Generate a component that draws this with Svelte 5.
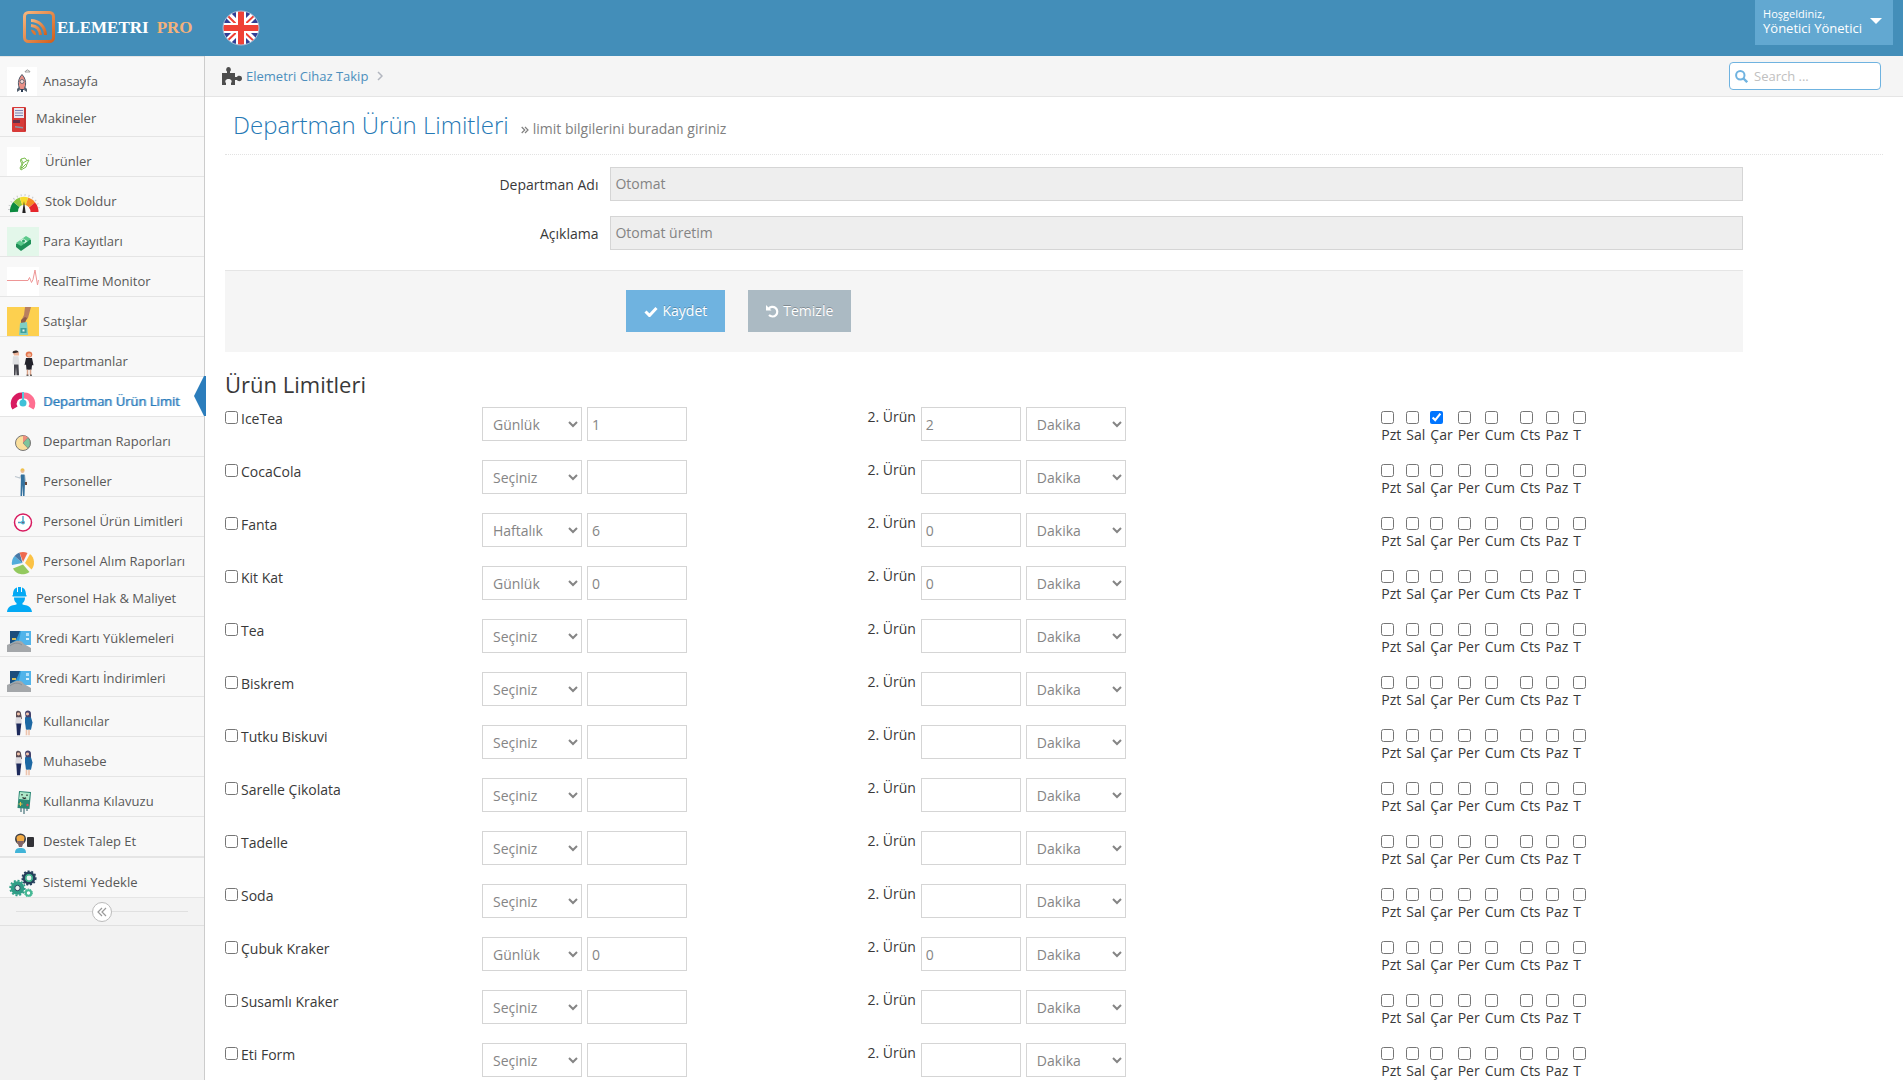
<script>
	const menu = [
		{ icon: "rocket", text: "Anasayfa" },
		{ icon: "machine", text: "Makineler", size: "small" },
		{ icon: "leaf", text: "Ürünler", size: "wide" },
		{ icon: "gauge", text: "Stok Doldur", size: "wide" },
		{ icon: "money", text: "Para Kayıtları" },
		{ icon: "pulse", text: "RealTime Monitor" },
		{ icon: "sale", text: "Satışlar" },
		{ icon: "couple", text: "Departmanlar" },
		{ icon: "meter", text: "Departman Ürün Limit", active: true },
		{ icon: "pie", text: "Departman Raporları" },
		{ icon: "worker", text: "Personeller" },
		{ icon: "clock", text: "Personel Ürün Limitleri" },
		{ icon: "chart", text: "Personel Alım Raporları" },
		{ icon: "helmet", text: "Personel Hak & Maliyet", size: "small" },
		{ icon: "card", text: "Kredi Kartı Yüklemeleri", size: "small" },
		{ icon: "card", text: "Kredi Kartı İndirimleri", size: "small" },
		{ icon: "women", text: "Kullanıcılar" },
		{ icon: "women", text: "Muhasebe" },
		{ icon: "robot", text: "Kullanma Kılavuzu" },
		{ icon: "support", text: "Destek Talep Et" },
		{ icon: "gears", text: "Sistemi Yedekle", last: true }
	];

	const boxes = { small: [25, 25], wide: [34, 29], normal: [32, 29] };

	const days = ["Pzt", "Sal", "Çar", "Per", "Cum", "Cts", "Paz", "T"];
	const periods = ["Seçiniz", "Günlük", "Haftalık", "Aylık"];
	const units = ["Dakika", "Saat"];

	let products = [
		{ name: "IceTea", period: "Günlük", limit: "1", second: "2", unit: "Dakika", days: ["Çar"] },
		{ name: "CocaCola" },
		{ name: "Fanta", period: "Haftalık", limit: "6", second: "0" },
		{ name: "Kit Kat", period: "Günlük", limit: "0", second: "0" },
		{ name: "Tea" },
		{ name: "Biskrem" },
		{ name: "Tutku Biskuvi" },
		{ name: "Sarelle Çikolata" },
		{ name: "Tadelle" },
		{ name: "Soda" },
		{ name: "Çubuk Kraker", period: "Günlük", limit: "0", second: "0" },
		{ name: "Susamlı Kraker" },
		{ name: "Eti Form" }
	].map((p) => ({ period: "Seçiniz", limit: "", second: "", unit: "Dakika", days: [], ...p }));
</script>

{#snippet menuIcon(name, w, h)}
	<svg class="menu_icon" width={w} height={h} viewBox="0 0 {w} {h}" aria-hidden="true">
		{#if name === "rocket"}
			<rect width="30" height="29" fill="#fff" />
			<path d="M18 5h5c0-1-1-1-1.500-1 0-1.500-2-1.500-2.300 0-.7 0-1.200.3-1.200 1z" fill="#fff" stroke="#777" stroke-width=".7" />
			<path d="M12 20l-2 2v3l3-2zM18 20l2 2v3l-3-2z" fill="#53606f" />
			<path d="M15 7.500c3 3 4 7 3.500 11l-1.500 4h-4l-1.500-4c-.5-4 .5-8 3.500-11z" fill="#e98f86" stroke="#515b6b" />
			<circle cx="15" cy="14.500" r="2" fill="#f6dcd8" stroke="#515b6b" stroke-width=".8" />
			<path d="M15 22v3" stroke="#2d3e55" stroke-width="2" />
		{:else if name === "machine"}
			<rect x="5" y="0" width="14" height="25" rx="1" fill="#d83a38" />
			<rect x="7" y="1" width="10" height="10" fill="#e8e6ee" />
			<path d="M8 3.500h8M8 6h8M8 8.500h8" stroke="#7f86b4" stroke-width="1.200" />
			<path d="M6 13h7v3H6z" fill="#64304b" />
			<path d="M8 19l8 1v1.500l-8-1z" fill="#8b97a9" />
			<path d="M18 1v23" stroke="#b22a2b" />
		{:else if name === "leaf"}
			<rect width="33" height="29" fill="#fff" />
			<path d="M14 12l4-1 2 2.500 2-.5-2 4-1 3-5 3-1-2 2-4-1.500-3zM14 12l2 4 4-2.500M15 21l4-4M16 16l-2 6" fill="none" stroke="#7bbd4f" />
		{:else if name === "gauge"}
			<g transform="translate(0 -2)">
				<path d="M2 25A15 15 0 0 1 32 25" fill="none" stroke="#c8cacc" stroke-width="2" stroke-dasharray="1 3" />
				<path d="M7 27A10.500 10.500 0 0 1 9.400 19.500" fill="none" stroke="#0c8a3f" stroke-width="8" />
				<path d="M9.400 19.500A10.500 10.500 0 0 1 14 16.300" fill="none" stroke="#8cc63e" stroke-width="8" />
				<path d="M14 16.300A10.500 10.500 0 0 1 20 16.300" fill="none" stroke="#f6dc2c" stroke-width="8" />
				<path d="M20 16.300A10.500 10.500 0 0 1 25 20" fill="none" stroke="#f58a26" stroke-width="8" />
				<path d="M25 20A10.500 10.500 0 0 1 27.500 27" fill="none" stroke="#e5262c" stroke-width="8" />
				<path d="M17 16l1.700 12h-3.400z" fill="#222" />
			</g>
		{:else if name === "money"}
			<rect width="33" height="29" fill="#e3f7ea" />
			<path d="M9 17l10-7 5 3v4l-10 7-5-4z" fill="#1f8f57" />
			<path d="M9 16l10-7 5 3-10 7z" fill="#5cc98b" />
			<path d="M13 13.500l3-2.200 4.500 3-3 2.200z" fill="#d6f3e0" />
			<circle cx="16.500" cy="14" r="1.500" fill="#2aa467" />
		{:else if name === "pulse"}
			<rect width="32" height="29" fill="#fff" />
			<path d="M0 13.500h21l1.500-3 2 5 1.500-3 2-9.500 2.500 15 1-5" fill="none" stroke="#ee9696" />
		{:else if name === "sale"}
			<rect width="32" height="29" fill="#fdd04f" />
			<path d="M18 0h6l-3 11-4 4-3-1 3-6z" fill="#b9805f" />
			<path d="M14 13l4-3 2 1-2 5-4 1z" fill="#8b5a4a" />
			<path d="M13 16l7-1 1 13h-9z" fill="#7fcfc4" />
			<path d="M13.500 21h6v5h-6z" fill="#3f9f9a" />
			<path d="M15.500 22.500h2v2h-2z" fill="#e9f5ee" />
		{:else if name === "couple"}
			<g transform="translate(0 3) scale(1 .9)">
				<path d="M6 3c0-3 5-3 6 0v3H7z" fill="#efb59a" />
				<path d="M5.500 3c0-3 6-3 6-.5L7 3.500z" fill="#332b2b" />
				<path d="M6 7h5.500l1 9h-7z" fill="#dfe0e2" />
				<path d="M7 16h4.500l.5 12H9.500L9 19l-.5 9H7z" fill="#45454d" />
				<circle cx="22" cy="5" r="3.300" fill="#e3754c" />
				<circle cx="22.200" cy="5.500" r="2" fill="#f1b69a" />
				<path d="M19 9h6l1.500 8H25l-.5 5h-5L19 16l-1.500 1z" fill="#23232b" />
				<path d="M20.500 22v6M23.500 22v6" stroke="#d9a289" stroke-width="1.500" />
				<path d="M19.500 28h2M23 28h2" stroke="#222" />
			</g>
		{:else if name === "meter"}
			<path d="M8 21a8.200 8.200 0 0 1 8-12.500" fill="none" stroke="#d81b60" stroke-width="6" />
			<path d="M16 8.500a8.200 8.200 0 0 1 8 12.500" fill="none" stroke="#ff6f91" stroke-width="6" />
			<path d="M16 5v10" stroke="#59c6da" stroke-width="2" />
			<circle cx="16" cy="16" r="3.500" fill="#3fc1d8" />
		{:else if name === "pie"}
			<g transform="translate(0 -3)">
				<circle cx="16" cy="19" r="7.500" fill="#fadf9c" stroke="#777" />
				<path d="M16 19v-7.500a7.500 7.500 0 0 1 5 2.200z" fill="#ef8e7d" />
				<path d="M16 19l5-5.300a7.500 7.500 0 0 1 0 10.600z" fill="#7dc49c" stroke="#777" stroke-width=".6" />
			</g>
		{:else if name === "worker"}
			<circle cx="15.500" cy="4" r="2" fill="#e9bc95" />
			<path d="M13.500 3.500c0-3 4-3 4 0z" fill="#efc14c" />
			<path d="M14 8l-1 3-5-1.500M17.500 8l1.500 8" fill="none" stroke="#bdc7cf" stroke-width="1.200" />
			<path d="M14 7.500h3.500l.5 8.500-.5 13h-1.500l-.4-11-.6 11h-1.500z" fill="#34719e" />
			<path d="M18 15h2v3h-2z" fill="#6c4a3b" />
		{:else if name === "clock"}
			<g transform="translate(0 -4)">
				<circle cx="16" cy="19.500" r="8.500" fill="#fff" stroke="#d81b60" stroke-width="1.500" />
				<path d="M16 13v6.500h-5" fill="none" stroke="#4f9fc4" stroke-width="1.400" />
				<circle cx="16" cy="19.500" r="2" fill="#4cb3d4" />
				<circle cx="16" cy="19.500" r=".8" fill="#8d3f5c" />
			</g>
		{:else if name === "chart"}
			<path d="M15.500 16L5 18A11 11 0 0 1 7.500 9z" fill="#52addc" />
			<path d="M15.500 16L7.500 9A11 11 0 0 1 12.500 5.500z" fill="#4878a6" />
			<path d="M16 15L12.500 5.500a11 11 0 0 1 8 .5z" fill="#ee6a4e" />
			<path d="M18 16L23 7a11 11 0 0 1 1.500 15.500z" fill="#fbc245" />
			<path d="M16 17.500L22.500 25A11 11 0 0 1 6 21.500z" fill="#93c95e" />
		{:else if name === "helmet"}
			<path d="M6 8c0-5 2-7 4-7.500V5h1V0h3v5h1V.5c2 .5 4 2.500 4 7.500h.5v1.500h-14V8z" fill="#03a9f4" />
			<path d="M7 10.500h11c0 3-1 4.500-2.500 5.500v1.500c5 1 9 2 9.500 7.500H0c.5-5.500 4-6.500 9.500-7.500V16C8 15 7 13.500 7 10.500z" fill="#03a9f4" />
		{:else if name === "card"}
			<path d="M3 4h21v14H3z" fill="#2c97d3" />
			<path d="M3 4h10L9 13l-6 4z" fill="#1c4e7c" />
			<path d="M14 4h10v14h-6l-6-4z" fill="#52b4ea" />
			<rect x="5" y="11" width="4" height="2" fill="#d5bd59" />
			<rect x="19" y="6" width="3" height="3" fill="#b5e2fb" />
			<path d="M19 11h3v2h-3z" fill="#d8f0fc" />
			<path d="M0 18l9-4c4-.5 6 0 8 3l7 4v4H0z" fill="#a4a7aa" />
			<path d="M3 19c3-3 8-4 12-1" fill="none" stroke="#8a8e92" />
		{:else if name === "women"}
			<g transform="translate(0 3) scale(1 .9)">
				<path d="M9 3c0-3 5-3 5 1l1 6-6 1z" fill="#5a4b53" />
				<circle cx="11.500" cy="4.500" r="1.600" fill="#efc2aa" />
				<path d="M9 8h5l1 8H8z" fill="#dcdadf" />
				<path d="M9.300 15h5L13 28h-3z" fill="#1e2b5c" />
				<path d="M18 3c1-4 6-3 6 1v6h-5z" fill="#44426c" />
				<circle cx="20.500" cy="4.500" r="1.600" fill="#efc2aa" />
				<path d="M18 8h6l1.500 6-1.500 8h-5l-1-8z" fill="#1d68a3" />
				<path d="M19.500 22v6M22 22v6" stroke="#edc4ad" stroke-width="1.600" />
			</g>
		{:else if name === "robot"}
			<g transform="translate(0 3)">
				<path d="M12 1l12 1-1.500 17-12-1z" fill="#2b8774" />
				<path d="M13 2l10 1-1 7-10-1z" fill="#aee8c9" />
				<path d="M15 4v1.500M20 4.500V6M15.500 7.500q2 1.500 3.500.2" fill="none" stroke="#222" stroke-width="1.200" />
				<path d="M11.500 14h4M13.500 12v4" stroke="#e4c648" />
				<circle cx="20.500" cy="15" r="1.200" fill="#d9505b" />
				<path d="M14 18v4M17 18v6M20 18v3" stroke="#46747b" stroke-width="1.200" />
			</g>
		{:else if name === "support"}
			<g transform="translate(-2 3)">
				<circle cx="15.500" cy="9" r="5.500" fill="#3e3f45" />
				<path d="M11.500 8c0-4 8-4 8 0l-1 5c-2 2-5 2-6 0z" fill="#f2ab45" />
				<path d="M12 11h7l-2 6h-3z" fill="#80656a" />
				<path d="M10 23c0-4 2-5 5.500-5s5.500 1 5.500 5z" fill="#41b4d8" />
				<rect x="22" y="7" width="7" height="10" rx="1" fill="#323237" />
			</g>
		{:else if name === "gears"}
			<g transform="translate(0 2)">
				<circle cx="22" cy="8" r="5" fill="#e8f2f1" stroke="#26405c" stroke-width="3" />
				<circle cx="22" cy="8" r="6.800" fill="none" stroke="#26405c" stroke-width="1.600" stroke-dasharray="2 1.800" />
				<circle cx="22" cy="8" r="3.200" fill="none" stroke="#3eb489" stroke-width="1.500" />
				<circle cx="10.500" cy="18" r="4.800" fill="#e8f2f1" stroke="#2e9e86" stroke-width="4" />
				<circle cx="10.500" cy="18" r="7.300" fill="none" stroke="#2e9e86" stroke-width="1.800" stroke-dasharray="2 1.800" />
				<circle cx="10.500" cy="18" r="2.700" fill="none" stroke="#26405c" />
				<circle cx="21.500" cy="23" r="2.700" fill="#fff" stroke="#45b894" stroke-width="2" />
				<circle cx="21.500" cy="23" r="4" fill="none" stroke="#45b894" stroke-dasharray="1.500 1" />
			</g>
		{/if}
	</svg>
{/snippet}

<header class="navbar">
	<a class="brand" href="/" aria-label="Elemetri Pro">
		<svg width="32" height="34" viewBox="0 0 32 34" aria-hidden="true">
			<defs>
				<linearGradient id="orange" x1="0" y1="0" x2="1" y2="1">
					<stop offset="0" stop-color="#f7b57c" />
					<stop offset="1" stop-color="#d2601d" />
				</linearGradient>
			</defs>
			<rect x="1.500" y="2.500" width="29" height="29" rx="4" fill="none" stroke="url(#orange)" stroke-width="3" />
			<path d="M8 10.500c8 0 14 6 14.500 14.500M8 15.500c6 .5 9 4 9.500 9.500" fill="none" stroke="url(#orange)" stroke-width="3" />
			<path d="M8 19.500c3.500.5 5 2.500 5 5.500-2 0-4.500-2-5-5.500z" fill="#e0762f" />
		</svg>
		<span class="elemetri">ELEMETRI</span>
		<span class="pro">PRO</span>
	</a>
	<a class="flag" href="/en" aria-label="English">
		<svg width="38" height="36" viewBox="0 0 38 36" aria-hidden="true">
			<clipPath id="round"><ellipse cx="19" cy="18" rx="18" ry="17" /></clipPath>
			<g clip-path="url(#round)">
				<path d="M0 0h38v36H0z" fill="#323e95" />
				<path d="M2 1l34 34M36 1L2 35" stroke="#fff" stroke-width="7" />
				<path d="M4 4l15 15M34 33L19 19M34 4L19 18M4 32l15-14" stroke="#ef4136" stroke-width="2" />
				<path d="M19 0v36M0 18h38" stroke="#fff" stroke-width="10" />
				<path d="M19 0v36M0 18h38" stroke="#ef4136" stroke-width="6" />
			</g>
			<ellipse cx="19" cy="18" rx="18" ry="17" fill="none" stroke="#a9bdd6" />
		</svg>
	</a>
	<button class="user">
		<span class="user_info"><small>Hoşgeldiniz,</small>Yönetici Yönetici</span>
		<span class="caret"></span>
	</button>
</header>

<div class="container">
	<aside>
		<ul class="menu">
			{#each menu as item}
				{@const box = boxes[item.size ?? "normal"]}
				<li class:active={item.active} class:last={item.last} class:small={item.size === "small"}>
					<a href="#menu">
						{@render menuIcon(item.icon, box[0], box[1])}
						<span>{item.text}</span>
					</a>
				</li>
			{/each}
		</ul>
		<div class="collapse">
			<button aria-label="Menüyü daralt">
				<svg width="10" height="10" viewBox="0 0 10 10"><path d="M5 1L1 5l4 4M9 1L5 5l4 4" fill="none" stroke="#999" stroke-width="1.200" /></svg>
			</button>
		</div>
	</aside>

	<main>
		<div class="breadcrumbs">
			<svg width="20" height="18" viewBox="0 0 20 18" aria-hidden="true">
				<path d="M0 6h5V4.500C3.500 3.500 4 0 6.500 0S9.500 3.500 8 4.500V6h5v4h2c.5-1.500 5-2 5 1.500S15.500 14.500 15 13h-2v5H9v-2c1.500-1.500.5-4-2.500-4S2.500 14.500 4 16v2H0z" fill="#4d4d4d" />
			</svg>
			<a href="/">Elemetri Cihaz Takip</a>
			<svg class="angle" width="6" height="10" viewBox="0 0 6 10" aria-hidden="true"><path d="M1 1l4 4-4 4" fill="none" stroke="#b2b6bf" stroke-width="1.500" /></svg>
			<form class="search">
				<svg width="13" height="13" viewBox="0 0 13 13" aria-hidden="true"><circle cx="5.300" cy="5.300" r="4.200" fill="none" stroke="#6fb3e0" stroke-width="2" /><path d="M8.500 8.500l3.700 3.700" stroke="#6fb3e0" stroke-width="2.400" /></svg>
				<input type="text" placeholder="Search ..." aria-label="Search" />
			</form>
		</div>

		<div class="page">
			<div class="page_header">
				<h1>Departman Ürün Limitleri</h1>
				<svg width="8" height="8" viewBox="0 0 8 8" aria-hidden="true"><path d="M.7 1l3 3-3 3M4 1l3 3-3 3" fill="none" stroke="#808080" stroke-width="1.200" /></svg>
				<small>limit bilgilerini buradan giriniz</small>
			</div>

			<div class="outer">
				<form class="column">
					<div class="field">
						<label for="dep_name">Departman Adı</label>
						<div><input id="dep_name" type="text" value="Otomat" disabled /></div>
					</div>
					<div class="field">
						<label for="dep_info">Açıklama</label>
						<div><input id="dep_info" type="text" value="Otomat üretim" disabled /></div>
					</div>

					<div class="actions">
						<button type="button" class="save">
							<svg width="14" height="11" viewBox="0 0 14 11" aria-hidden="true"><path d="M1.500 5.500l4 4L12.500 2" fill="none" stroke="#fff" stroke-width="3" /></svg>
							Kaydet
						</button>
						<button type="reset">
							<svg width="13" height="13" viewBox="0 0 13 13" aria-hidden="true"><path d="M2.500 4A4.800 4.800 0 1 1 3 10" fill="none" stroke="#fff" stroke-width="2.200" /><path d="M0 0v5.500h5.500z" fill="#fff" /></svg>
							Temizle
						</button>
					</div>

					<h3>Ürün Limitleri</h3>

					{#each products as product}
						<div class="product">
							<div>
								<label class="name"><input type="checkbox" /><span>{product.name}</span></label>
							</div>
							<div class="controls">
								<select bind:value={product.period} aria-label="Periyot">
									{#each periods as period}
										<option>{period}</option>
									{/each}
								</select>
								<input type="text" bind:value={product.limit} aria-label="Limit" />
							</div>
							<div class="controls">
								<label class="second">2. Ürün <input type="text" bind:value={product.second} /></label>
								<select bind:value={product.unit} aria-label="Birim">
									{#each units as unit}
										<option>{unit}</option>
									{/each}
								</select>
							</div>
							<div class="days">
								{#each days as day}
									<label><input type="checkbox" value={day} bind:group={product.days} />{day}</label>
								{/each}
							</div>
						</div>
					{/each}
				</form>
			</div>
		</div>
	</main>
</div>

<style>
	:global(body) {
		margin: 0;
		background: #fff;
		color: #393939;
		font-family: "Open Sans", sans-serif;
		font-size: 14px;
		line-height: 20px;
	}

	:global(#app *) {
		box-sizing: border-box;
	}

	a {
		text-decoration: none;
	}

	button,
	input,
	select {
		font: inherit;
	}

	.navbar {
		display: flex;
		align-items: flex-start;
		height: 56px;
		padding: 0 10px 0 23px;
		background: #438eb9;
	}

	.brand {
		display: flex;
		align-items: center;
		height: 54px;
		font: bold 17px "Liberation Serif", serif;
	}

	.brand span {
		padding-top: 2px;
	}

	.elemetri {
		margin: 0 8px 0 2px;
		color: #fff;
	}

	.pro {
		color: #f3b27c;
	}

	.flag {
		margin: 10px 0 0 29px;
	}

	.user {
		display: flex;
		align-items: center;
		gap: 8px;
		height: 45px;
		margin-left: auto;
		padding: 0 11px 4px 8px;
		border: 0;
		background: #62a8d1;
		color: #fff;
		font-size: 13px;
		line-height: 14px;
		text-align: left;
	}

	.user small {
		display: block;
		font-size: 11px;
	}

	.caret {
		border: 6px solid transparent;
		border-top-color: #fff;
		border-bottom: 0;
	}

	.container {
		display: flex;
		min-height: calc(100vh - 56px);
	}

	aside {
		flex: 0 0 205px;
		border-right: 1px solid #ccc;
		background: #f2f2f2;
	}

	.menu {
		list-style: none;
		margin: 0;
		padding: 0;
		border-top: 1px solid #e5e5e5;
	}

	.menu li {
		height: 40px;
		border-bottom: 1px solid #e5e5e5;
		background: #f8f8f8;
	}

	.menu .last {
		height: 41px;
		border-top: 1px solid #e5e5e5;
	}

	.menu a {
		display: flex;
		align-items: center;
		gap: 4px;
		padding: 10px 0 0 7px;
		color: #585858;
		font-size: 13px;
		white-space: nowrap;
	}

	.menu span {
		padding-bottom: 2px;
	}

	.menu .small span {
		padding-bottom: 4px;
	}

	.menu_icon {
		flex: none;
	}

	.menu .active {
		position: relative;
		background: #fff;
	}

	.active a {
		color: #2b7dbc;
		text-shadow: 1px 0 0 rgba(43, 125, 188, 0.6);
	}

	.active::after {
		content: "";
		position: absolute;
		top: -1px;
		right: -2px;
		width: 12px;
		height: 40px;
		background: #2b7dbc;
		clip-path: polygon(0 50%, 10px 0, 100% 0, 100% 100%, 10px 100%);
	}

	.collapse {
		display: flex;
		align-items: center;
		height: 28px;
		padding: 0 16px;
		border-bottom: 1px solid #e0e0e0;
		background: #f3f3f3;
	}

	.collapse::before,
	.collapse::after {
		content: "";
		flex: 1;
		height: 1px;
		background: #e0e0e0;
	}

	.collapse button {
		display: flex;
		align-items: center;
		justify-content: center;
		width: 20px;
		height: 20px;
		padding: 0;
		border: 1px solid #bbb;
		border-radius: 50%;
		background: #fff;
	}

	main {
		flex: 1;
		min-width: 0;
	}

	.breadcrumbs {
		display: flex;
		align-items: center;
		gap: 4px;
		height: 41px;
		padding: 0 22px 0 17px;
		border-bottom: 1px solid #e5e5e5;
		background: #f5f5f5;
		font-size: 13px;
	}

	.breadcrumbs a {
		color: #4c8fbd;
	}

	.angle {
		margin-left: 5px;
	}

	.search {
		display: flex;
		align-items: center;
		gap: 6px;
		width: 152px;
		height: 28px;
		margin-left: auto;
		padding: 0 5px;
		border: 1px solid #6fb3e0;
		border-radius: 4px;
		background: #fff;
	}

	.search svg {
		flex: none;
	}

	.search input {
		width: 100%;
		padding: 0;
		border: 0;
		outline: 0;
		color: #666;
	}

	.search input::placeholder {
		color: #c0c0c0;
	}

	.page {
		padding: 8px 20px 0;
	}

	.page_header {
		display: flex;
		align-items: baseline;
		height: 50px;
		margin-bottom: 12px;
		padding: 6px 8px 0;
		border-bottom: 1px dotted #e2e2e2;
	}

	.page_header h1 {
		margin: 0 12px 0 0;
		color: #2679b5;
		font-size: 24px;
		font-weight: 300;
		line-height: 28px;
	}

	.page_header small {
		margin-left: 4px;
		color: #808080;
		font-size: 14px;
	}

	.outer {
		margin: 0 -12px;
	}

	/* eleven of twelve columns */
	.column {
		width: calc(100% * 11 / 12);
		padding: 0 12px;
	}

	.field,
	.product {
		display: grid;
		margin: 0 -12px 15px;
	}

	.field {
		grid-template-columns: 3fr 9fr;
	}

	.field label {
		padding-top: 8px;
		text-align: right;
	}

	.field > div,
	.product > div {
		padding: 0 12px;
	}

	input[type="text"],
	select {
		color: #858585;
	}

	.field input,
	.controls input,
	select {
		height: 34px;
		border: 1px solid #d5d5d5;
		border-radius: 0;
		background: #fff;
	}

	.controls input {
		padding: 4px;
	}

	.field input {
		width: 100%;
		padding: 3px 4px 5px;
	}

	.field input:disabled {
		background: #eee;
		color: #848484;
	}

	select {
		padding: 3px 6px;
	}

	.controls input,
	select {
		width: 100px;
	}

	.actions {
		display: flex;
		gap: 23px;
		margin: 20px 0 17px;
		padding: 19px 0 20px calc(25% + 22px);
		border-top: 1px solid #e5e5e5;
		background: #f5f5f5;
	}

	.actions button {
		display: flex;
		align-items: center;
		gap: 4px;
		height: 42px;
		padding: 0 18px;
		border: 0;
		background: #abbac3;
		color: #fff;
		text-shadow: 0 -1px 0 rgba(0, 0, 0, 0.25);
	}

	.actions .save {
		background: #6fb3e0;
	}

	h3 {
		margin: 0 0 8px;
		font-size: 22px;
		font-weight: 400;
		line-height: 30px;
	}

	.product {
		grid-template-columns: 2fr 3fr 4fr 3fr;
		margin-bottom: 19px;
	}

	.product:last-child {
		margin-bottom: 0;
	}

	input[type="checkbox"] {
		width: 13px;
		height: 13px;
		margin: 4px 0 0;
	}

	.name {
		display: flex;
		gap: 3px;
	}

	.name span {
		padding-top: 2px;
	}

	.controls,
	.second {
		display: flex;
		align-items: flex-start;
		gap: 5px;
	}

	.days {
		display: flex;
		gap: 5px;
		height: 34px;
	}

	.days label {
		display: flex;
		flex-direction: column;
		align-items: flex-start;
		gap: 1px;
	}
</style>
